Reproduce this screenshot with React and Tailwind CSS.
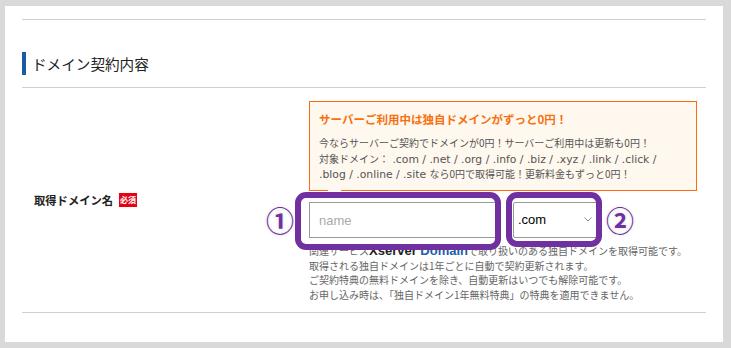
// Domain contract section — signup form step with annotated inputs

const JP = { fontFamily: '"Noto Sans CJK JP", "Liberation Sans", sans-serif' };
const AR = { fontFamily: '"Liberation Sans", Arial, sans-serif' };
const LAT = { fontFamily: '"DejaVu Sans", "Noto Sans CJK JP", sans-serif' };

function Marker({ children }) {
  return (
    <span
      className="flex h-[28px] w-[28px] items-center justify-center text-[28px] font-bold leading-none text-[#7030a0] [text-shadow:0_0_2px_#fff,0_0_3px_#ccc]"
      style={JP}
    >
      {children}
    </span>
  );
}

// latin runs inside the promo box render in a wider face, like the original page
const L = ({ children }) => (
  <span className="text-[10.8px] leading-none" style={LAT}>
    {children}
  </span>
);

export default function App() {
  return (
    <div className="min-h-screen bg-[#d9d9d9] pb-[6px] pl-[5px] pr-[8px] pt-[6px]" style={JP}>
      <div className="h-[336px] bg-white px-[17px] pt-[13px]">
        <div className="border-t border-[#d0d0d0]" />

        <h2 className="mt-[32px] flex h-[23px] items-center border-l-4 border-[#1c5aa6] pl-[6px] text-[14.6px] font-normal text-[#222]">
          ドメイン契約内容
        </h2>

        <div className="mt-[12px] flex border-y border-[#d0d0d0]">
          {/* label */}
          <div className="flex w-[287px] items-center pl-[12px]">
            <span className="text-[11.3px] font-bold text-[#222]">取得ドメイン名</span>
            <span className="ml-[6px] flex h-[14px] w-[18px] items-center justify-center bg-[#e50012] text-[8px] font-bold leading-none text-white">
              必須
            </span>
          </div>

          {/* field */}
          <div className="w-[388px] pb-[10px] pt-[13px]">
            <div className="relative h-[90px] border border-[#ff6a13] bg-[#fff8ef] px-[9px] pt-[9px]">
              <p className="text-[11.5px] font-bold leading-[16px] text-[#f7700f]">
                サーバーご利用中は独自ドメインがずっと0円！
              </p>
              <p className="mt-[8px] text-[10px] leading-[15.5px] text-[#555]">
                今ならサーバーご契約でドメインが0円！サーバーご利用中は更新も0円！
                <br />
                対象ドメイン：<L> .com / .net / .org / .info / .biz / .xyz / .link / .click /</L>
                <br />
                <L>.blog / .online / .site </L>なら0円で取得可能！更新料金もずっと0円！
              </p>
              <span className="absolute -bottom-px left-[18px] h-px w-[13px] bg-[#fff8ef]" />
            </div>

            <div className="relative mt-[11px]">
              <div className="flex gap-[14px]">
                <input
                  className="h-[36px] w-[190px] border border-[#999] bg-white px-[9px] text-[13px] text-[#333] outline-none placeholder:text-[#aaa]"
                  style={AR}
                  placeholder="name"
                />
                <div className="relative h-[36px] w-[85px]">
                  <select
                    className="h-full w-full appearance-none rounded-[2px] border border-[#999] bg-white pl-[4px] text-[13px] text-black outline-none"
                    style={AR}
                    defaultValue=".com"
                  >
                    <option value=".com">.com</option>
                  </select>
                  <svg
                    className="pointer-events-none absolute right-[6px] top-[15px]"
                    width="8"
                    height="5"
                    viewBox="0 0 8 5"
                    fill="none"
                    stroke="#888"
                    strokeWidth="1"
                  >
                    <path d="M0.5 0.5 L4 4 L7.5 0.5" />
                  </svg>
                </div>
              </div>

              <p className="mt-[6px] text-[10px] leading-[14.5px] text-[#666]">
                関連サービス
                <span className="text-[13px] font-bold leading-none text-[#222]" style={AR}>Xserver </span>
                <span className="text-[13px] font-bold leading-none text-[#1b5eab]" style={AR}>Domain</span>
                で取り扱いのある独自ドメインを取得可能です。
                <br />
                取得される独自ドメインは1年ごとに自動で契約更新されます。
                <br />
                ご契約特典の無料ドメインを除き、自動更新はいつでも解除可能です。
                <br />
                お申し込み時は、「独自ドメイン1年無料特典」の特典を適用できません。
              </p>

              {/* annotation overlay */}
              <div className="absolute left-[-14px] top-[-10px] h-[58px] w-[206px] rounded-[11px] border-[6px] border-[#7030a0]" />
              <div className="absolute left-[197px] top-[-10px] h-[55px] w-[96px] rounded-[11px] border-[6px] border-[#7030a0]" />
              <div className="absolute left-[-43px] top-[4px]">
                <Marker>①</Marker>
              </div>
              <div className="absolute left-[297px] top-[4px]">
                <Marker>②</Marker>
              </div>
            </div>
          </div>
        </div>
      </div>
    </div>
  );
}
